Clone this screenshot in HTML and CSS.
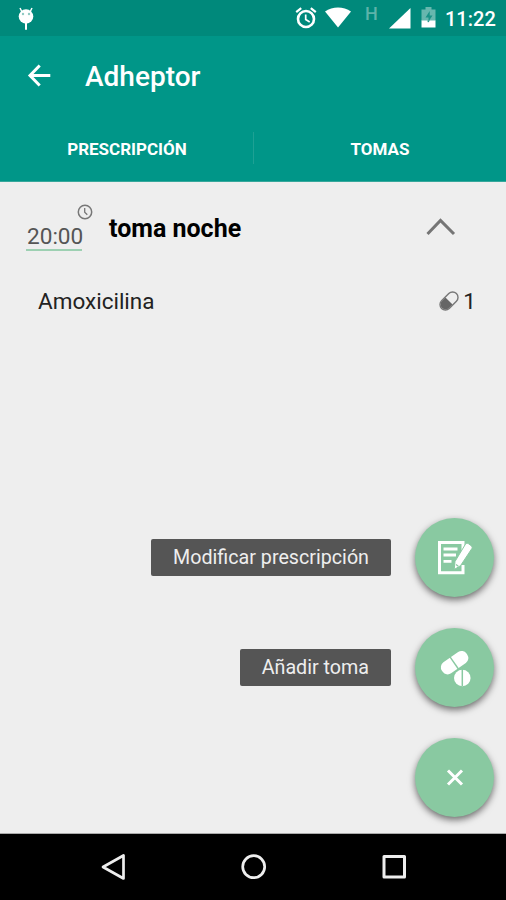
FILE: index.html
```html
<!DOCTYPE html>
<html lang="es">
<head>
    <meta charset="UTF-8">
    <meta name="viewport" content="width=device-width, initial-scale=1.0">
    <title>Adheptor</title>
    <link rel="stylesheet" href="styles.css">
</head>
<body>
    <div class="screen">
        <div class="statusbar">
            <svg class="bug" width="18" height="24" viewBox="0 0 18 24">
                <path d="M3 1l2 4M15 1l-2 4" stroke="#fff" stroke-width="1.5"/>
                <ellipse cx="9" cy="9.5" rx="7.3" ry="7.2" fill="#fff"/>
                <path d="M9 16v6" stroke="#fff" stroke-width="2" stroke-linecap="round"/>
                <circle cx="6" cy="7" r="1.2" fill="#8fc9c2"/>
                <circle cx="12" cy="7" r="1.2" fill="#8fc9c2"/>
            </svg>
            <div class="status-icons">
                <svg class="alarm" width="22" height="22" viewBox="0 0 22 22" fill="none" stroke="#fff">
                    <circle cx="11" cy="12" r="8" stroke-width="2.6"/>
                    <path d="M1.2 5.2l5-4M20.8 5.2l-5-4" stroke-width="2.2"/>
                    <path d="M10.7 7.5v5l4 2.5" stroke-width="1.7"/>
                </svg>
                <svg class="wifi" width="26" height="21" viewBox="0 0 26 21">
                    <path d="M0 4.5C7.5-.8 18.500-.8 26 4.500L13 20.500z" fill="#fff"/>
                </svg>
                <span class="net">H</span>
                <svg class="signal" width="22" height="21" viewBox="0 0 22 21">
                    <path d="M21.500 0v20.500H0z" fill="#fff"/>
                </svg>
                <svg class="battery" width="15" height="21" viewBox="0 0 15 21">
                    <path d="M4.500 0h6v2.500h4v11.500H.500V2.500h4z" fill="#67b7ae"/>
                    <path d="M8.700 4L4.500 10.500h3v4l4-6h-2.800z" fill="#1a9387"/>
                    <path d="M.500 13.500h5.800l.7 2 2-2h5.500V20.500H.500z" fill="#fff"/>
                </svg>
                <span class="hour">11:22</span>
            </div>
        </div>

        <div class="toolbar">
            <svg class="back" width="24" height="24" viewBox="0 0 24 24" fill="none" stroke="#fff" stroke-width="3">
                <path d="M12.700 1.500L3 11.500l9.700 10M3 11.500H23.300"/>
            </svg>
            <h1>Adheptor</h1>
        </div>

        <div class="tabs">
            <a class="tab">PRESCRIPCIÓN</a>
            <a class="tab">TOMAS</a>
        </div>

        <div class="content">
            <div class="toma">
                <div class="hora">
                    <svg class="clock" width="16" height="16" viewBox="0 0 16 16" fill="none" stroke="#777">
                        <circle cx="8" cy="8" r="6.700" stroke-width="1.500"/>
                        <path d="M7.700 4v4.200l2.600 2.500" stroke-width="1.300"/>
                    </svg>
                    <span class="hora-valor">20:00</span>
                </div>
                <h2>toma noche</h2>
                <svg class="chevron" width="30" height="18" viewBox="0 0 30 18" fill="none" stroke="#757575" stroke-width="3">
                    <path d="M1.500 16L14.500 2.500l13.500 13.500"/>
                </svg>
            </div>

            <div class="medicina">
                <span>Amoxicilina</span>
                <div class="cantidad">
                    <svg width="20" height="20" viewBox="0 0 20 20">
                        <g transform="rotate(-45 10 10)">
                            <path d="M10 5H5.200a5 5 0 0 0 0 10H10z" fill="#666"/>
                            <rect x="-0.500" y="4.600" width="21" height="10.800" rx="5.400" fill="none" stroke="#777" stroke-width="1.400"/>
                        </g>
                    </svg>
                    <span>1</span>
                </div>
            </div>

            <div class="acciones">
                <div class="accion">
                    <span class="etiqueta">Modificar prescripción</span>
                    <button class="fab">
                        <svg width="36" height="36" viewBox="0 0 36 36">
                            <path d="M26 11V2.500H2.500v30.300H26V25" fill="none" stroke="#fff" stroke-width="3"/>
                            <path d="M6.500 9h14M6.500 15h12.500M6.500 21.300h8" stroke="#fff" stroke-width="2.800"/>
                            <path d="M28.800 3.600q1.200-1 2.500 0l3.200 2.300q1.300 1.200.4 2.600L23.500 25.700l-6.300 3.800.8-8z" fill="#fff" stroke="#89c9a1" stroke-width="1"/>
                            <path d="M19 24.500l2.300 1.700" stroke="#89c9a1" stroke-width="1.200"/>
                        </svg>
                    </button>
                </div>
                <div class="accion">
                    <span class="etiqueta">Añadir toma</span>
                    <button class="fab">
                        <svg width="36" height="36" viewBox="0 0 36 36">
                            <g transform="rotate(-35 17.500 12.500)">
                                <rect x="2.500" y="6" width="30" height="13.400" rx="6" fill="#fff"/>
                                <path d="M17 5v16" stroke="#89c9a1" stroke-width="1.400"/>
                            </g>
                            <circle cx="25.300" cy="28" r="9.200" fill="#89c9a1"/>
                            <circle cx="25.300" cy="28" r="8.300" fill="#fff"/>
                            <path d="M25.300 19v17" stroke="#89c9a1" stroke-width="1.500"/>
                        </svg>
                    </button>
                </div>
                <div class="accion">
                    <button class="fab">
                        <svg width="36" height="36" viewBox="0 0 36 36">
                            <path d="M11 10.500l14 14M25 10.500l-14 14" stroke="#fff" stroke-width="3"/>
                        </svg>
                    </button>
                </div>
            </div>
        </div>

        <div class="navbar">
            <svg width="28" height="28" viewBox="0 0 28 28" fill="none" stroke="#eee" stroke-width="2.700" stroke-linejoin="round">
                <path d="M23.500 2.500v23L3 14z"/>
            </svg>
            <svg width="28" height="28" viewBox="0 0 28 28" fill="none" stroke="#eee" stroke-width="2.700">
                <circle cx="13.700" cy="13.700" r="11"/>
            </svg>
            <svg width="28" height="28" viewBox="0 0 28 28" fill="none" stroke="#eee" stroke-width="3" stroke-linejoin="round">
                <rect x="4" y="3.500" width="20.500" height="20.500"/>
            </svg>
        </div>
    </div>
</body>
</html>
```

FILE: styles.css
```css
* {
    box-sizing: border-box;
}
body, html {
    height: 100%;
    margin: 0;
    font-family: Roboto, sans-serif;
    background-color: #eee;
}
svg {
    display: block;
    flex-shrink: 0;
    overflow: visible;
}
.screen {
    display: flex;
    flex-direction: column;
    width: 506px;
    height: 900px;
    overflow: hidden;
}

/* Barra de estado */
.statusbar {
    display: flex;
    justify-content: space-between;
    height: 36px;
    padding: 7px 10px 0 17px;
    background-color: #00897b;
    color: #fff;
}
.status-icons {
    display: flex;
}
.wifi {
    margin-left: 8px;
}
.net {
    width: 12px;
    margin: -3px 12px 0 14px;
    font-size: 18px;
    font-weight: 500;
    line-height: 20px;
    color: #5db3a9;
}
.signal {
    margin-top: 1px;
}
.battery {
    margin-left: 10px;
}
.hour {
    width: 51px;
    margin-left: 9px;
    font-size: 20px;
    font-weight: 500;
    line-height: 25px;
    white-space: nowrap;
}

/* Cabecera */
.toolbar {
    display: flex;
    align-items: center;
    height: 80px;
    padding-left: 27px;
    background-color: #009688;
}
h1 {
    margin: 1px 0 0 34px;
    font-size: 28px;
    font-weight: 500;
    line-height: 32px;
    color: #fff;
}
.tabs {
    display: flex;
    height: 66px;
    padding: 16px 0 17px 1px;
    border-bottom: 1px solid #36a79b;
    background-color: #009688;
}
.tab {
    flex: 1;
    font-size: 17px;
    font-weight: 700;
    line-height: 35px;
    text-align: center;
    color: #fff;
}
.tab + .tab {
    border-left: 1px solid #1ea194;
}

/* Contenido */
.content {
    display: flex;
    flex-direction: column;
    flex: 1;
    border-bottom: 1px solid #aaa;
}
.toma {
    display: flex;
    height: 90px;
    padding: 22px 50px 0 26px;
}
.hora {
    width: 67px;
}
.clock {
    margin-left: auto;
}
.hora-valor {
    display: block;
    width: 56px;
    height: 31px;
    padding-left: 1px;
    border-bottom: 2px solid #9dd0b2;
    font-size: 22.6px;
    font-weight: 400;
    line-height: 33px;
    color: #555;
}
h2 {
    flex: 1;
    margin: 10px 0 0 16px;
    font-size: 25px;
    font-weight: 700;
    line-height: 30px;
    color: #000;
}
.chevron {
    margin-top: 14px;
}
.medicina {
    display: flex;
    justify-content: space-between;
    align-items: center;
    height: 58px;
    padding: 0 30px 0 38px;
    font-size: 22.5px;
    color: #222;
}
.cantidad {
    display: flex;
    align-items: center;
    gap: 4px;
}

/* Botones flotantes */
.acciones {
    display: flex;
    flex-direction: column;
    gap: 31px;
    margin-top: auto;
    padding: 0 12px 16px 0;
}
.accion {
    display: flex;
    justify-content: flex-end;
    align-items: center;
    gap: 24px;
}
.etiqueta {
    height: 37px;
    padding: 0 22px;
    border-radius: 2px;
    background-color: #555;
    font-size: 19.7px;
    line-height: 38px;
    color: #eee;
}
.fab {
    display: flex;
    justify-content: center;
    align-items: center;
    width: 79px;
    height: 79px;
    padding: 0;
    border: none;
    border-radius: 50%;
    background-color: #89c9a1;
    box-shadow: 0 3px 7px rgba(0, 0, 0, 0.55);
    cursor: pointer;
}

/* Barra de navegacion */
.navbar {
    display: flex;
    justify-content: space-between;
    align-items: center;
    height: 66px;
    padding: 0 98px 0 100px;
    background-color: #000;
}
```
